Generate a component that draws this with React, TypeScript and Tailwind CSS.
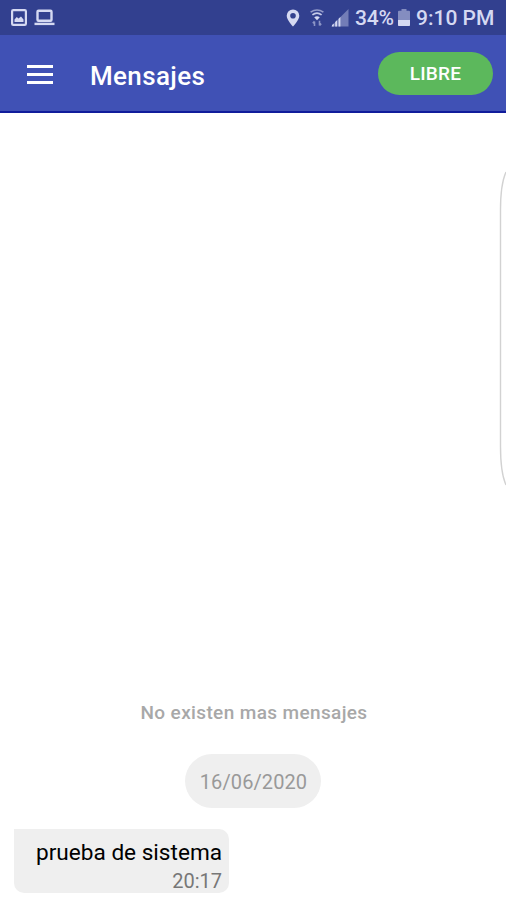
import React from 'react';

interface Message {
  id: number;
  text: string;
  time: string;
}

const messages: Message[] = [{ id: 1, text: 'prueba de sistema', time: '20:17' }];

const PictureIcon = () => (
  <svg className="w-4 h-[17px]" viewBox="0 0 16 17" fill="none">
    <rect x="1.1" y="1.1" width="13.8" height="14.8" rx="1.2" stroke="currentColor" strokeWidth="2.2" />
    <path d="M3.5 13V10.5L5.8 8l1.7 1.6L10 7.6l2.5 3V13z" fill="currentColor" />
  </svg>
);

const LaptopIcon = () => (
  <svg className="w-[21px] h-[17px]" viewBox="0 0 21 17" fill="none">
    <rect x="3.5" y="1.8" width="14" height="10" rx="1" stroke="currentColor" strokeWidth="2.4" />
    <path d="M0.5 14.9h20" stroke="currentColor" strokeWidth="2.4" />
  </svg>
);

const PinIcon = () => (
  <svg className="w-[14px] h-[18px]" viewBox="0 0 14 18" fill="currentColor">
    <path
      fillRule="evenodd"
      d="M7 0.5A6.3 6.3 0 0 0 0.7 6.8C0.7 11.2 7 17.5 7 17.5s6.3-6.3 6.3-10.7A6.3 6.3 0 0 0 7 0.5zm0 3.4a2.8 2.8 0 1 1 0 5.6 2.8 2.8 0 0 1 0-5.6z"
    />
  </svg>
);

const WifiIcon = () => (
  <svg className="w-[14px] h-[18px]" viewBox="0 0 14 18" fill="none" stroke="currentColor">
    <path d="M0.6 3.2Q7-1.3 13.4 3.2" strokeWidth="1.6" opacity=".6" />
    <path d="M2.4 5.9Q7 2.4 11.6 5.9" strokeWidth="1.8" opacity=".9" />
    <path d="M4.2 8.3Q7 6.2 9.8 8.3L7 11.2z" fill="currentColor" stroke="none" />
    <path d="M4.5 17v-4.5M2.8 14.2l1.7-1.8M9.5 11.8v4.7M11.2 14.6l-1.7 1.9" strokeWidth="1.6" opacity=".55" />
  </svg>
);

const SignalIcon = () => (
  <svg className="w-[18px] h-[18px]" viewBox="0 0 18 18" fill="currentColor">
    <path d="M0 17.5L17.5 0v17.5z" opacity=".4" />
    <path d="M1 17.5v-1.4l1.8-1.6v3zM4.2 17.5v-4.4l1.8-1.8v6.2zM7.6 17.5V9.8L9.4 8v9.5z" />
  </svg>
);

const BatteryIcon = () => (
  <svg className="w-3 h-[17px]" viewBox="0 0 12 17" fill="currentColor">
    <path d="M3.5 0h5v1.7H11q1 0 1 1V16q0 1-1 1H1q-1 0-1-1V2.7q0-1 1-1h2.5z" opacity=".5" />
    <path d="M0 11h12v5q0 1-1 1H1q-1 0-1-1z" />
  </svg>
);

const StatusBar = () => (
  <div className="flex h-[35px] shrink-0 items-center bg-[#32408f] pl-[11px] pr-3 text-[#d5d9f2]">
    <PictureIcon />
    <div className="ml-[7px]">
      <LaptopIcon />
    </div>
    <div className="ml-auto flex items-center">
      <PinIcon />
      <div className="ml-[10px]">
        <WifiIcon />
      </div>
      <div className="ml-[7px]">
        <SignalIcon />
      </div>
      <span className="ml-[6px] w-[40px] whitespace-nowrap pt-[2px] text-[21px] font-medium leading-none tracking-[-0.2px]">
        34%
      </span>
      <div className="ml-[3px]">
        <BatteryIcon />
      </div>
      <span className="ml-[6px] w-[78px] whitespace-nowrap pt-[2px] text-[21px] font-medium leading-none">
        9:10 PM
      </span>
    </div>
  </div>
);

const Header = () => (
  <header className="flex h-[78px] shrink-0 items-center border-b-2 border-[#101c9b] bg-[#4051b5] pl-[27px] pr-[13px]">
    <button className="flex w-[26px] flex-col gap-[5px] pt-[2px]" aria-label="Menu">
      <span className="h-[3px] bg-white" />
      <span className="h-[3px] bg-white" />
      <span className="h-[3px] bg-white" />
    </button>
    <h1 className="ml-[37px] pt-[6px] text-[26px] font-medium leading-none tracking-[0.35px] text-white">Mensajes</h1>
    <button className="ml-auto h-[43px] w-[115px] rounded-full bg-[#5cb85c] pt-[2px] text-[19px] font-medium tracking-[0.2px] text-white">
      LIBRE
    </button>
  </header>
);

const MessageBubble = ({ message }: { message: Message }) => (
  <div className="flex h-16 w-[215px] flex-col items-end rounded-[10px] rounded-tl-none bg-[#efefef] pr-[7px] pt-[10px]">
    <p className="whitespace-nowrap text-[22.6px] leading-[27px] text-black">{message.text}</p>
    <span className="mt-[4px] text-[20px] leading-[23px] text-[#777]">{message.time}</span>
  </div>
);

export default function App() {
  return (
    <div className="relative flex h-[900px] w-[506px] flex-col overflow-hidden bg-white font-['Roboto',sans-serif]">
      <StatusBar />
      <Header />
      <main className="flex flex-1 flex-col justify-end pb-[7px]">
        <p className="mb-[29px] pl-[2px] text-center text-[19px] font-medium leading-6 tracking-[0.37px] text-[#a8a8a8]">
          No existen mas mensajes
        </p>
        <div className="mb-[21px] flex h-[54px] w-[136px] items-center justify-center self-center rounded-full bg-[#efefef] pl-[1px] pt-[2px] text-[20px] tracking-[0.1px] text-[#999]">
          16/06/2020
        </div>
        <div className="pl-[14px]">
          {messages.map((message) => (
            <MessageBubble key={message.id} message={message} />
          ))}
        </div>
      </main>
      {/* edge panel handle */}
      <svg className="absolute right-0 top-[170px] h-[318px] w-[7px]" viewBox="0 0 7 318" fill="none">
        <path d="M7 2Q1.5 14 1.5 40V276Q1.5 303 7 315" stroke="#d2d2d2" strokeWidth="1.4" />
      </svg>
    </div>
  );
}
